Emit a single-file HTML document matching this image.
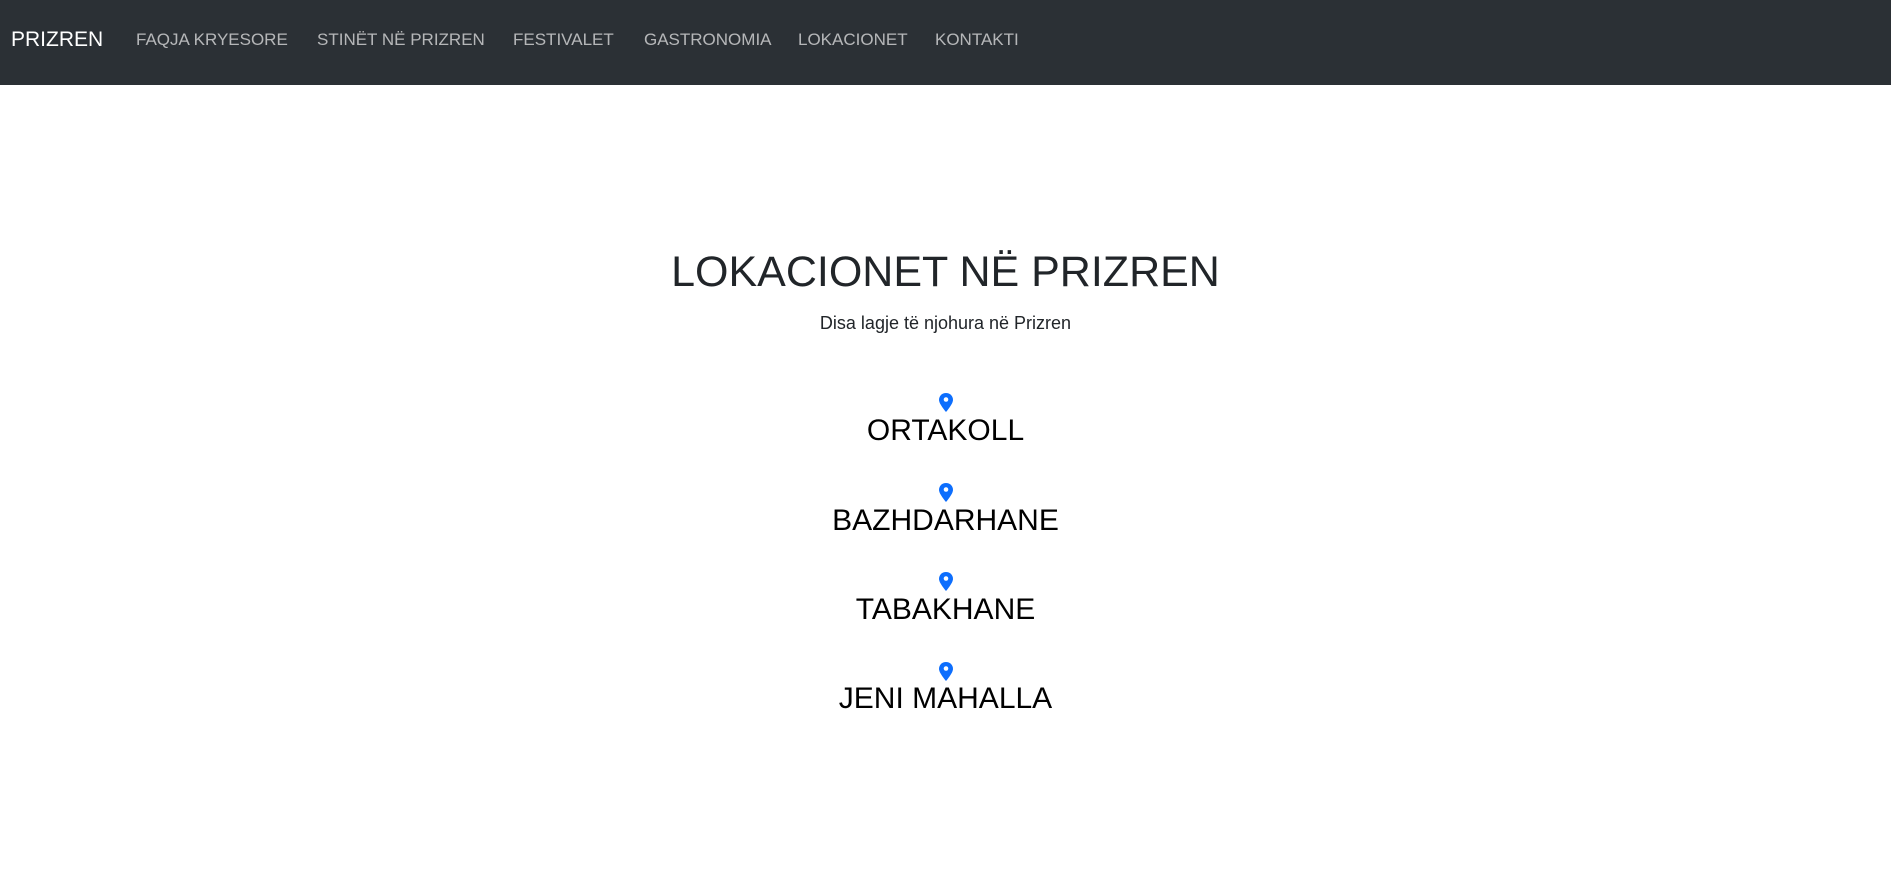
<!DOCTYPE html>
<html><head><meta charset="utf-8"><style>
*{margin:0;padding:0;box-sizing:border-box}
body{width:1891px;height:886px;background:#fff;font-family:"Liberation Sans",sans-serif;position:relative;overflow:hidden;color:#212529}
nav{position:absolute;left:0;top:0;width:1891px;height:85px;background:#2b3035}
nav span{position:absolute;top:40px;transform:translateY(-50%);color:rgba(255,255,255,.65);font-size:17px;white-space:nowrap}
nav .b{color:#fff;font-size:21px;left:11px}
.c{position:absolute;left:0;width:1891px;text-align:center;white-space:nowrap}
h1{font-weight:500;font-size:43px;top:248px}
.s{font-size:18px;top:313px}
h2{font-weight:500;font-size:30px;color:#000}
.p{position:absolute;left:939px;width:14px;height:19px}
</style></head><body>
<nav>
<span class="b">PRIZREN</span>
<span style="left:136px">FAQJA KRYESORE</span>
<span style="left:317px">STINËT NË PRIZREN</span>
<span style="left:513px">FESTIVALET</span>
<span style="left:644px">GASTRONOMIA</span>
<span style="left:798px">LOKACIONET</span>
<span style="left:935px">KONTAKTI</span>
</nav>
<h1 class="c">LOKACIONET NË PRIZREN</h1>
<div class="c s">Disa lagje të njohura në Prizren</div>
<svg class="p" style="top:393px" viewBox="0 0 14 19"><path d="M7 0C3 0 0 3 0 7c0 4 7 12 7 12s7-8 7-12C14 3 11 0 7 0z" fill="#0d6efd"/><circle cx="7" cy="6.5" r="2.3" fill="#fff"/></svg>
<h2 class="c" style="top:414px">ORTAKOLL</h2>
<svg class="p" style="top:483px" viewBox="0 0 14 19"><path d="M7 0C3 0 0 3 0 7c0 4 7 12 7 12s7-8 7-12C14 3 11 0 7 0z" fill="#0d6efd"/><circle cx="7" cy="6.5" r="2.3" fill="#fff"/></svg>
<h2 class="c" style="top:504px">BAZHDARHANE</h2>
<svg class="p" style="top:572px" viewBox="0 0 14 19"><path d="M7 0C3 0 0 3 0 7c0 4 7 12 7 12s7-8 7-12C14 3 11 0 7 0z" fill="#0d6efd"/><circle cx="7" cy="6.5" r="2.3" fill="#fff"/></svg>
<h2 class="c" style="top:593px">TABAKHANE</h2>
<svg class="p" style="top:662px" viewBox="0 0 14 19"><path d="M7 0C3 0 0 3 0 7c0 4 7 12 7 12s7-8 7-12C14 3 11 0 7 0z" fill="#0d6efd"/><circle cx="7" cy="6.5" r="2.3" fill="#fff"/></svg>
<h2 class="c" style="top:682px">JENI MAHALLA</h2>
</body></html>
